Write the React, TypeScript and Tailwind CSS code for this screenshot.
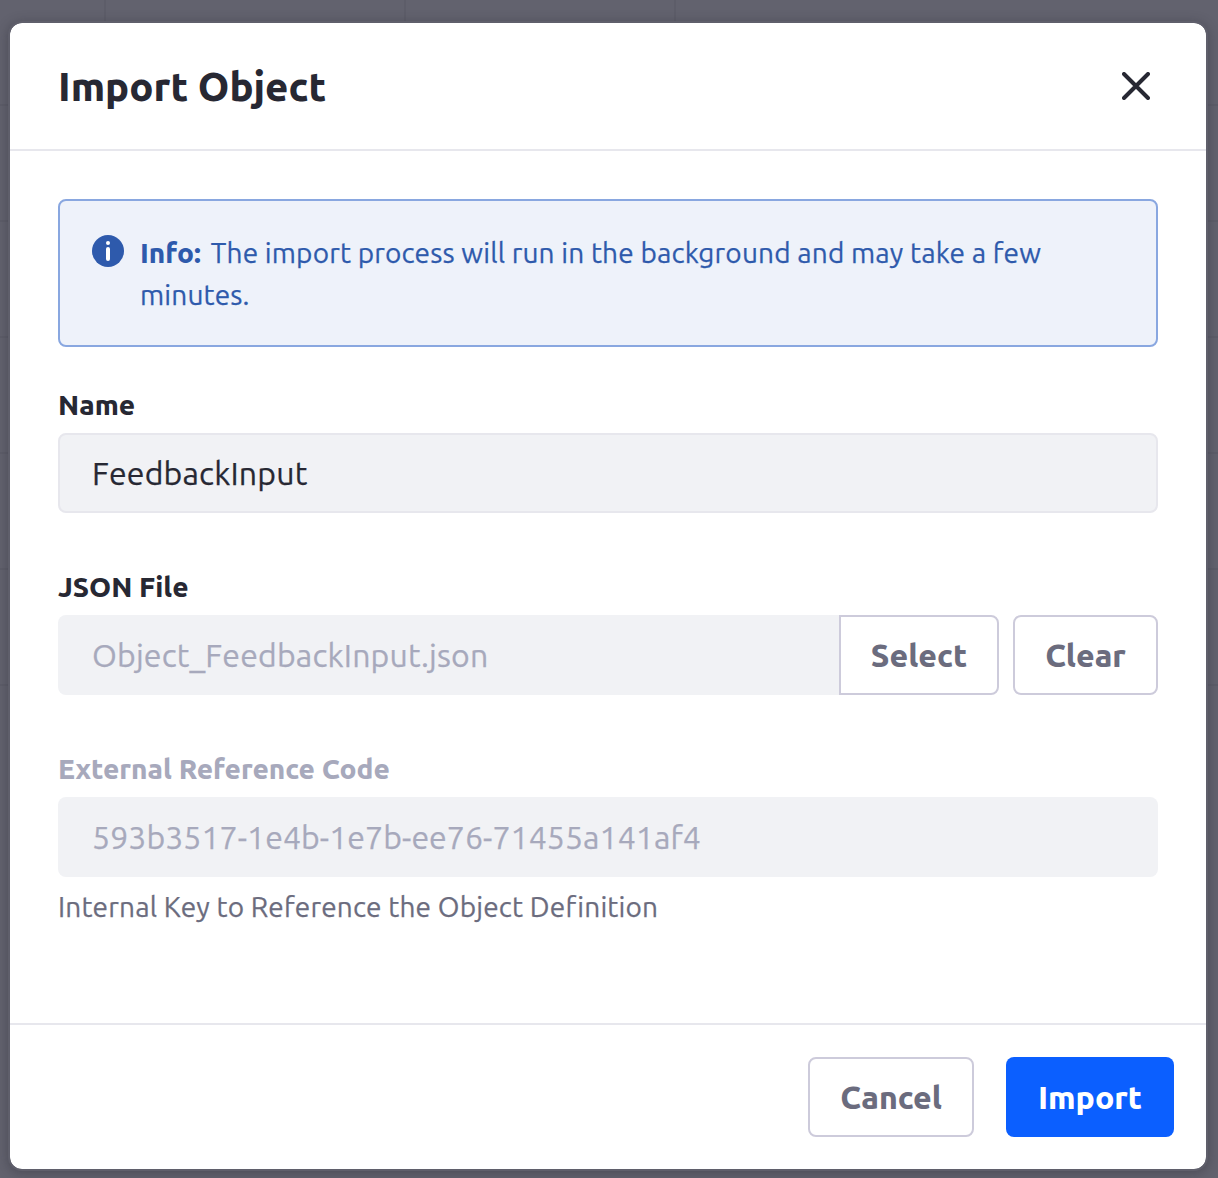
import type { ReactNode } from "react";

const columnLines = [104, 404, 674];
const rowLines = [104, 220, 336, 452, 568, 684];

const regularStroke = "[-webkit-text-stroke-width:0.25px]";

function Label({ children, className }: { children: ReactNode; className: string }) {
  return <label className={`block h-[42px] text-[28px] leading-[42px] font-extrabold ${className}`}>{children}</label>;
}

function Header() {
  return (
    <header className="flex h-32 items-center justify-between border-b-2 border-[#e7e7ed] pr-14 pl-12">
      <h1 className="pt-0.5 text-[40px] leading-[60px] font-extrabold text-[#272833]">Import Object</h1>
      <button aria-label="Close" className="flex size-7 items-center justify-center">
        <svg viewBox="0 0 28 28" className="size-7" fill="none" stroke="#272833" strokeWidth="4" strokeLinecap="round">
          <path d="M2 2 26 26M26 2 2 26" />
        </svg>
      </button>
    </header>
  );
}

function InfoAlert() {
  return (
    <div className="flex h-[148px] rounded-lg border-2 border-[#89a7e0] bg-[#eef2fa] pt-[31px] pl-8 text-[28px] leading-[42px] text-[#2e5aac]">
      <svg viewBox="0 0 32 32" className="mt-[3px] size-8 shrink-0">
        <circle cx="16" cy="16" r="16" fill="#2e5aac" />
        <circle cx="16" cy="8" r="2" fill="#fff" />
        <rect x="14" y="12" width="4" height="14" rx="2" fill="#fff" />
      </svg>
      <p className="ml-4 whitespace-nowrap">
        <strong className="mr-2.5 font-extrabold">Info:</strong>
        <span className={`tracking-[0.15px] ${regularStroke}`}>
          The import process will run in the background and may take a few
          <br />
          minutes.
        </span>
      </p>
    </div>
  );
}

export default function App() {
  return (
    <div className="relative h-[1178px] w-[1218px] overflow-hidden bg-[#62626e] px-2 pt-[21px] font-['Ubuntu','Open_Sans',sans-serif]">
      {columnLines.map((x) => (
        <div key={x} className="absolute top-0 h-6 w-0.5 bg-[#5d5d69]" style={{ left: x }} />
      ))}
      {rowLines.map((y) => (
        <div key={y} className="absolute left-0 h-0.5 w-full bg-[#5d5d69]" style={{ top: y }} />
      ))}

      <div
        role="dialog"
        className="relative h-[1150px] w-[1200px] rounded-[14px] border-2 border-[#5f5f6b] bg-white bg-clip-padding shadow-[0_2px_12px_rgba(39,40,51,0.4)]"
      >
        <Header />
        <main className="h-[872px] px-12 pt-12">
          <InfoAlert />

          <section className="mt-[37px]">
            <Label className="text-[#272833]">Name</Label>
            <div
              className={`mt-[7px] flex h-20 items-center rounded-lg border-2 border-[#e7e7ed] bg-[#f1f2f5] px-8 text-[32px] tracking-[0.18px] text-[#272833] ${regularStroke}`}
            >
              FeedbackInput
            </div>
          </section>

          <section className="mt-[53px]">
            <Label className="text-[#272833]">JSON File</Label>
            <div className="mt-[7px] flex h-20">
              <div
                className={`flex flex-1 items-center rounded-l-lg bg-[#f1f2f5] pl-[34px] text-[32px] tracking-[0.17px] text-[#a7a9bc] ${regularStroke}`}
              >
                Object_FeedbackInput.json
              </div>
              <button className="w-40 rounded-r-lg border-2 border-[#cdcbdb] bg-white text-[32px] font-extrabold text-[#6b6c7e]">
                Select
              </button>
              <button className="ml-3.5 w-[145px] rounded-lg border-2 border-[#cdcbdb] bg-white text-[32px] font-extrabold text-[#6b6c7e]">
                Clear
              </button>
            </div>
          </section>

          <section className="mt-[53px]">
            <Label className="text-[#a7a9bc]">External Reference Code</Label>
            <div
              className={`mt-[7px] flex h-20 items-center rounded-lg bg-[#f1f2f5] px-[34px] text-[32px] tracking-[0.08px] text-[#a7a9bc] ${regularStroke}`}
            >
              593b3517-1e4b-1e7b-ee76-71455a141af4
            </div>
            <p className={`mt-[9px] text-[28px] leading-[42px] tracking-[0.17px] text-[#6b6c7e] ${regularStroke}`}>
              Internal Key to Reference the Object Definition
            </p>
          </section>
        </main>
        <footer className="flex justify-end gap-8 border-t-2 border-[#e7e7ed] pt-8 pr-8 text-[32px] font-extrabold">
          <button className="h-20 w-[166px] rounded-lg border-2 border-[#cdcbdb] bg-white text-[#6b6c7e]">Cancel</button>
          <button className="h-20 w-[168px] rounded-lg bg-[#0b5fff] text-white">Import</button>
        </footer>
      </div>
    </div>
  );
}
